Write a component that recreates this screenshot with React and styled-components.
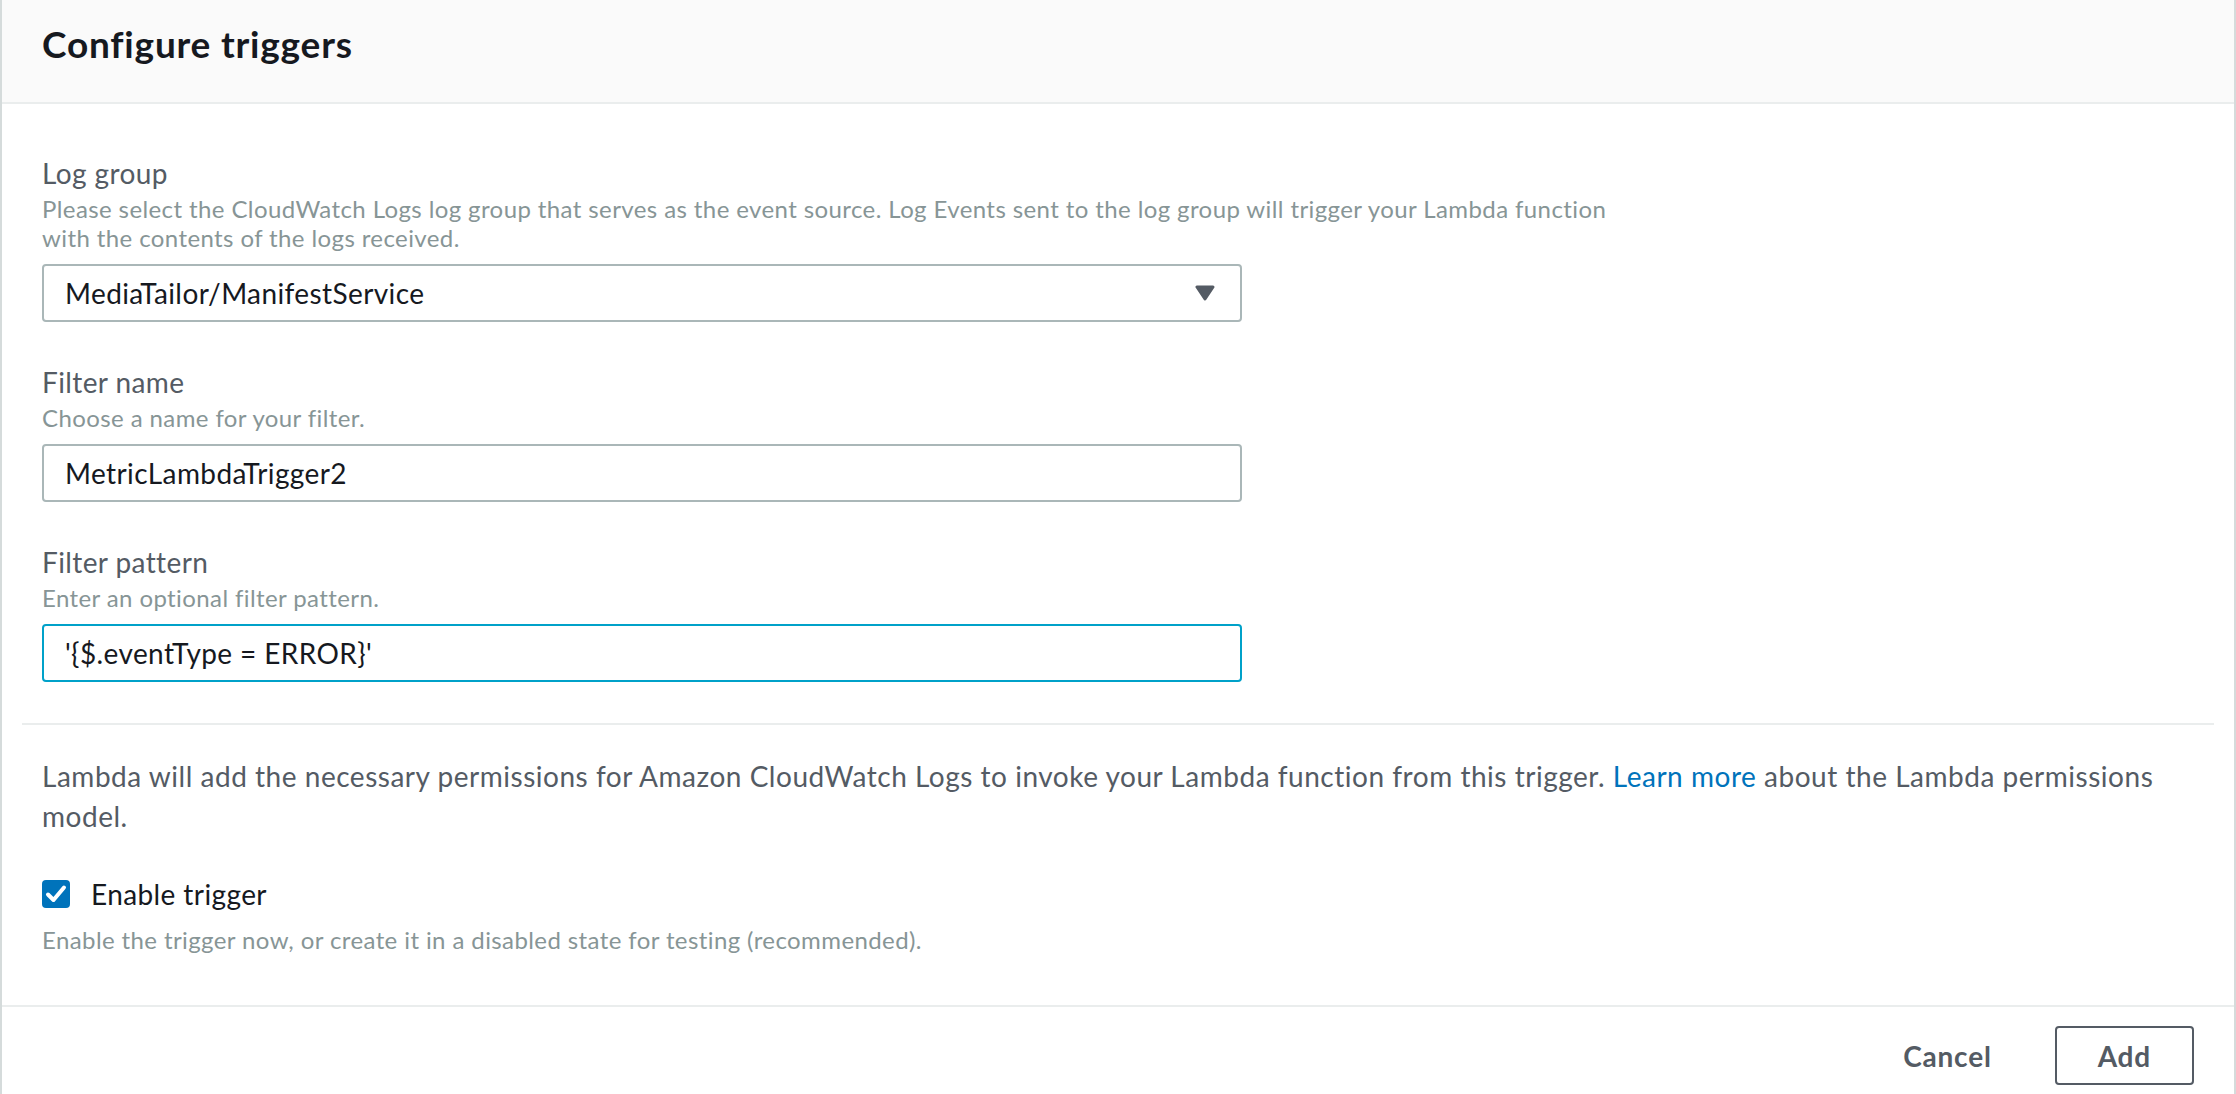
import React from "react";
import styled, { createGlobalStyle } from "styled-components";

const GlobalStyle = createGlobalStyle`
  html, body {
    margin: 0;
    padding: 0;
    background: #ffffff;
    overflow: hidden;
  }
  body {
    font-family: Lato, "Liberation Sans", sans-serif;
    letter-spacing: 0.4px;
    -webkit-font-smoothing: antialiased;
  }
  * {
    box-sizing: border-box;
  }
`;

const Panel = styled.div`
  border-left: 2px solid #d5dbdb;
  border-right: 2px solid #d5dbdb;
  background: #ffffff;
  min-height: 1120px;
`;

const Header = styled.div`
  height: 104px;
  padding: 22px 40px 0;
  background: #fafafa;
  border-bottom: 2px solid #eaeded;
`;

const Title = styled.h2`
  margin: 0;
  font-size: 37px;
  line-height: 44px;
  font-weight: 700;
  letter-spacing: 0.8px;
  color: #16191f;
`;

const Body = styled.div`
  padding: 0 20px;
`;

const FormSection = styled.div`
  padding: 49px 20px 41px;
`;

const Field = styled.div`
  & + & {
    margin-top: 40px;
  }
`;

const Label = styled.div`
  font-size: 28px;
  line-height: 40px;
  color: #545b64;
`;

const Description = styled.div`
  margin-top: 1px;
  max-width: 1600px;
  font-size: 24px;
  line-height: 29px;
  color: #879596;
`;

const Control = styled.div`
  margin-top: 12px;
`;

const SelectBox = styled.div`
  width: 1200px;
  height: 58px;
  padding: 0 25px 0 21px;
  display: flex;
  align-items: center;
  justify-content: space-between;
  border: 2px solid #aab7b8;
  border-radius: 4px;
  font-size: 28px;
  color: #16191f;
  background: #ffffff;
`;

const TextInput = styled.input`
  display: block;
  width: 1200px;
  height: 58px;
  padding: 0 21px;
  border: 2px solid ${(props) => (props.focused ? "#00a1c9" : "#aab7b8")};
  border-radius: 4px;
  font-family: inherit;
  font-size: 28px;
  letter-spacing: inherit;
  color: #16191f;
  background: #ffffff;
  outline: none;
`;

const Divider = styled.div`
  height: 2px;
  background: #eaeded;
`;

const InfoSection = styled.div`
  padding: 31px 20px 51px;
`;

const Paragraph = styled.p`
  margin: 0;
  font-size: 28px;
  line-height: 40px;
  letter-spacing: 0.52px;
  color: #545b64;
`;

const Link = styled.a`
  color: #0073bb;
  text-decoration: none;
`;

const CheckRow = styled.label`
  margin-top: 38px;
  display: flex;
  align-items: center;
  gap: 21px;
  font-size: 28px;
  line-height: 40px;
  color: #16191f;
`;

const CheckBox = styled.span`
  width: 28px;
  height: 28px;
  border-radius: 4px;
  background: #0073bb;
  display: flex;
  align-items: center;
  justify-content: center;
`;

const Helper = styled.div`
  margin-top: 11px;
  font-size: 24px;
  line-height: 29px;
  color: #879596;
`;

const Footer = styled.div`
  display: flex;
  justify-content: flex-end;
  gap: 20px;
  padding: 19px 40px 20px;
  border-top: 2px solid #eaeded;
`;

const Button = styled.button`
  height: 59px;
  padding: 0 41px;
  border: 2px solid ${(props) => (props.outlined ? "#545b64" : "transparent")};
  border-radius: 4px;
  background: #ffffff;
  font-family: inherit;
  font-size: 28px;
  font-weight: 700;
  letter-spacing: 0.8px;
  color: #545b64;
  cursor: pointer;
`;

const Caret = () => (
  <svg width="20" height="16" viewBox="0 0 20 16">
    <path d="M2 2 L18 2 L10 14 Z" fill="#545b64" stroke="#545b64" strokeWidth="3" strokeLinejoin="round" />
  </svg>
);

const Check = () => (
  <svg width="28" height="28" viewBox="0 0 28 28">
    <path d="M6 14.5 L11.5 20 L22 7.5" fill="none" stroke="#ffffff" strokeWidth="4" strokeLinecap="round" strokeLinejoin="round" />
  </svg>
);

export default function App() {
  return (
    <>
      <GlobalStyle />
      <Panel>
        <Header>
          <Title>Configure triggers</Title>
        </Header>
        <Body>
          <FormSection>
            <Field>
              <Label>Log group</Label>
              <Description>
                Please select the CloudWatch Logs log group that serves as the event source. Log Events sent to the log group will trigger your Lambda function with the contents of the logs received.
              </Description>
              <Control>
                <SelectBox>
                  <span>MediaTailor/ManifestService</span>
                  <Caret />
                </SelectBox>
              </Control>
            </Field>
            <Field>
              <Label>Filter name</Label>
              <Description>Choose a name for your filter.</Description>
              <Control>
                <TextInput readOnly value="MetricLambdaTrigger2" />
              </Control>
            </Field>
            <Field>
              <Label>Filter pattern</Label>
              <Description>Enter an optional filter pattern.</Description>
              <Control>
                <TextInput readOnly focused value="'{$.eventType = ERROR}'" />
              </Control>
            </Field>
          </FormSection>
          <Divider />
          <InfoSection>
            <Paragraph>
              Lambda will add the necessary permissions for Amazon CloudWatch Logs to invoke your Lambda function from this trigger.{" "}
              <Link href="#">Learn more</Link> about the Lambda permissions model.
            </Paragraph>
            <CheckRow>
              <CheckBox>
                <Check />
              </CheckBox>
              Enable trigger
            </CheckRow>
            <Helper>Enable the trigger now, or create it in a disabled state for testing (recommended).</Helper>
          </InfoSection>
        </Body>
        <Footer>
          <Button>Cancel</Button>
          <Button outlined>Add</Button>
        </Footer>
      </Panel>
    </>
  );
}
